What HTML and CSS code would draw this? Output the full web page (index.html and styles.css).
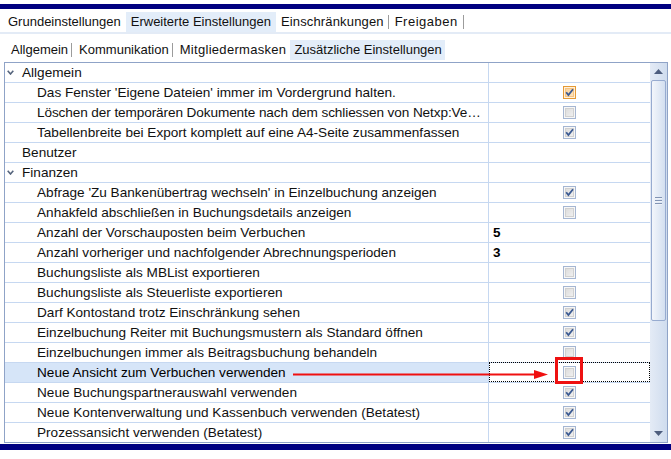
FILE: index.html
```html
<!DOCTYPE html>
<html lang="de">
<head>
<meta charset="utf-8">
<title>Einstellungen</title>
<link rel="stylesheet" href="styles.css">
</head>
<body>
<div class="topbar"></div>
<div class="tabs tabs1">
  <span class="tab">Grundeinstellungen</span>
  <span class="tab active">Erweiterte Einstellungen</span>
  <span class="tab t-ein">Einschränkungen</span><i class="sep"></i>
  <span class="tab t-frei">Freigaben</span><i class="sep"></i>
</div>
<div class="tabs tabs2">
  <span class="tab t-all">Allgemein</span><i class="sep"></i>
  <span class="tab t-kom">Kommunikation</span><i class="sep"></i>
  <span class="tab t-mit">Mitgliedermasken</span>
  <span class="tab active t-zus">Zusätzliche Einstellungen</span>
</div>

<div class="grid">
  <div class="rows">
    <div class="row group"><div class="name"><svg class="chev" width="7" height="5" viewBox="0 0 7 5"><polyline points="0.7,0.8 3.5,4 6.3,0.8" fill="none" stroke="#56657d" stroke-width="1.6"/></svg>Allgemein</div><div class="val"></div></div>
    <div class="row"><div class="name child">Das Fenster 'Eigene Dateien' immer im Vordergrund halten.</div><div class="val"><span class="cb hover"><svg width="11" height="11" viewBox="0 0 11 11"><polyline points="2.2,5.2 4.4,8 9,2.2" fill="none" stroke="#3b5a92" stroke-width="1.8"/></svg></span></div></div>
    <div class="row"><div class="name child narrow">Löschen der temporären Dokumente nach dem schliessen von Netxp:Vereinsverwaltung</div><div class="val"><span class="cb"></span></div></div>
    <div class="row"><div class="name child">Tabellenbreite bei Export komplett auf eine A4-Seite zusammenfassen</div><div class="val"><span class="cb"><svg width="11" height="11" viewBox="0 0 11 11"><polyline points="2.2,5.2 4.4,8 9,2.2" fill="none" stroke="#3b5a92" stroke-width="1.8"/></svg></span></div></div>
    <div class="row group"><div class="name nochev">Benutzer</div><div class="val"></div></div>
    <div class="row group"><div class="name"><svg class="chev" width="7" height="5" viewBox="0 0 7 5"><polyline points="0.7,0.8 3.5,4 6.3,0.8" fill="none" stroke="#56657d" stroke-width="1.6"/></svg>Finanzen</div><div class="val"></div></div>
    <div class="row"><div class="name child">Abfrage 'Zu Bankenübertrag wechseln' in Einzelbuchung anzeigen</div><div class="val"><span class="cb"><svg width="11" height="11" viewBox="0 0 11 11"><polyline points="2.2,5.2 4.4,8 9,2.2" fill="none" stroke="#3b5a92" stroke-width="1.8"/></svg></span></div></div>
    <div class="row"><div class="name child">Anhakfeld abschließen in Buchungsdetails anzeigen</div><div class="val"><span class="cb"></span></div></div>
    <div class="row"><div class="name child">Anzahl der Vorschauposten beim Verbuchen</div><div class="val num">5</div></div>
    <div class="row"><div class="name child">Anzahl vorheriger und nachfolgender Abrechnungsperioden</div><div class="val num">3</div></div>
    <div class="row"><div class="name child">Buchungsliste als MBList exportieren</div><div class="val"><span class="cb"></span></div></div>
    <div class="row"><div class="name child">Buchungsliste als Steuerliste exportieren</div><div class="val"><span class="cb"></span></div></div>
    <div class="row"><div class="name child">Darf Kontostand trotz Einschränkung sehen</div><div class="val"><span class="cb"><svg width="11" height="11" viewBox="0 0 11 11"><polyline points="2.2,5.2 4.4,8 9,2.2" fill="none" stroke="#3b5a92" stroke-width="1.8"/></svg></span></div></div>
    <div class="row"><div class="name child">Einzelbuchung Reiter mit Buchungsmustern als Standard öffnen</div><div class="val"><span class="cb"><svg width="11" height="11" viewBox="0 0 11 11"><polyline points="2.2,5.2 4.4,8 9,2.2" fill="none" stroke="#3b5a92" stroke-width="1.8"/></svg></span></div></div>
    <div class="row"><div class="name child">Einzelbuchungen immer als Beitragsbuchung behandeln</div><div class="val"><span class="cb"></span></div></div>
    <div class="row sel"><div class="name child">Neue Ansicht zum Verbuchen verwenden</div><div class="val"><span class="cb"></span></div></div>
    <div class="row"><div class="name child">Neue Buchungspartnerauswahl verwenden</div><div class="val"><span class="cb"><svg width="11" height="11" viewBox="0 0 11 11"><polyline points="2.2,5.2 4.4,8 9,2.2" fill="none" stroke="#3b5a92" stroke-width="1.8"/></svg></span></div></div>
    <div class="row"><div class="name child">Neue Kontenverwaltung und Kassenbuch verwenden (Betatest)</div><div class="val"><span class="cb"><svg width="11" height="11" viewBox="0 0 11 11"><polyline points="2.2,5.2 4.4,8 9,2.2" fill="none" stroke="#3b5a92" stroke-width="1.8"/></svg></span></div></div>
    <div class="row"><div class="name child">Prozessansicht verwenden (Betatest)</div><div class="val"><span class="cb"><svg width="11" height="11" viewBox="0 0 11 11"><polyline points="2.2,5.2 4.4,8 9,2.2" fill="none" stroke="#3b5a92" stroke-width="1.8"/></svg></span></div></div>
  </div>
  <div class="scroll">
    <div class="sbtn"><svg width="9" height="5" viewBox="0 0 9 5"><polygon points="0,5 4.5,0 9,5" fill="#4d5d7e"/></svg></div>
    <div class="thumb"><i></i><i></i><i></i></div>
    <div class="track"></div>
    <div class="sbtn"><svg width="9" height="5" viewBox="0 0 9 5"><polygon points="0,0 9,0 4.5,5" fill="#4d5d7e"/></svg></div>
  </div>
</div>
<div class="bottombar"></div>

<svg class="annot" width="671" height="459" viewBox="0 0 671 459">
  <line x1="293" y1="374.5" x2="537" y2="374.5" stroke="#f01010" stroke-width="2"/>
  <polygon points="534,370 548,374.5 534,379" fill="#f01010"/>
  <rect x="556.5" y="358.5" width="25" height="24" fill="none" stroke="#ee1111" stroke-width="3"/>
</svg>
</body>
</html>
```

FILE: styles.css
```css
body {
  margin: 0;
  background: #fff;
  font-family: "Liberation Sans", Arial, sans-serif;
  font-size: 13px;
  color: #111;
}

.topbar {
  margin-top: 4px;
  height: 5px;
  background: #000080;
}

.tabs {
  display: flex;
  align-items: center;
  height: 20px;
}

.tabs1 {
  margin-top: 3px;
  padding-left: 3px;
  border-bottom: 2px solid #e3ebf6;
}

.tabs2 {
  margin-top: 6px;
  padding-left: 6px;
}

.tab {
  height: 20px;
  line-height: 20px;
  padding: 0 5px;
  white-space: nowrap;
}

.tab.active {
  background: #e3edf9;
}

.t-ein { padding: 0 4px 0 5px; letter-spacing: 0.15px; }
.t-frei { padding: 0 5px 0 6px; letter-spacing: 0.5px; }
.t-all { padding: 0 3px 0 5px; }
.t-kom { padding: 0 3px 0 7px; }
.t-mit { padding: 0 4px 0 7px; letter-spacing: 0.3px; }
.t-zus { padding: 0 3px 0 4px; }

.sep {
  display: block;
  width: 1px;
  height: 14px;
  background: #9c9c9c;
}

.grid {
  margin: 2px 0 0 4px;
  width: 664px;
  box-sizing: border-box;
  border: 1px solid #8fa3c7;
  display: flex;
}

.rows {
  width: 645px;
  height: 379px;
  overflow: hidden;
  font-size: 13.6px;
}

.row {
  display: flex;
  height: 19px;
  border-bottom: 1px solid #c6d8f1;
}

.name {
  width: 484px;
  box-sizing: border-box;
  border-right: 1px solid #c6d8f1;
  line-height: 19px;
  white-space: nowrap;
  overflow: hidden;
  text-overflow: ellipsis;
  padding-left: 2px;
  padding-right: 3px;
}

.name.narrow {
  letter-spacing: -0.1px;
}

.chev {
  display: inline-block;
  vertical-align: middle;
  margin: -2px 8px 0 0;
}

.name.nochev {
  padding-left: 17px;
}

.name.child {
  padding-left: 32px;
}

.val {
  flex: 1;
  display: flex;
  align-items: center;
  justify-content: center;
}

.val.num {
  justify-content: flex-start;
  padding-left: 4px;
  font-weight: bold;
  color: #000;
  font-size: 13.5px;
}

.row.sel .name {
  background: #d6e5f8;
  color: #000;
}

.row.sel .val {
  margin-top: -1px;
  height: 20px;
  outline: 1px dotted #000;
  outline-offset: -1px;
}

.cb {
  width: 13px;
  height: 13px;
  box-sizing: border-box;
  border: 1px solid #a5b6d2;
  background: linear-gradient(135deg, #d8d8d8, #f4f4f4);
  box-shadow: inset 0 0 0 1px #f7f7f7, inset 0 0 0 2px #d0d0d0;
  display: block;
}

.cb svg {
  display: block;
}

.cb.hover {
  border-color: #e49a36;
  background: linear-gradient(135deg, #f9cf94, #fde6c4);
  box-shadow: inset 0 0 0 1px #fff1dc, inset 0 0 0 2px #f6c483;
}

.scroll {
  width: 17px;
  height: 379px;
  display: flex;
  flex-direction: column;
  align-items: center;
  background: linear-gradient(to right, #e4ebf6, #cfdcee);
}

.sbtn {
  width: 17px;
  height: 17px;
  display: flex;
  align-items: center;
  justify-content: center;
  flex: none;
}

.thumb {
  width: 15px;
  height: 241px;
  box-sizing: border-box;
  border: 1px solid #97abd0;
  border-radius: 2px;
  background: linear-gradient(to right, #f3f6fb, #d3dff0);
  display: flex;
  flex-direction: column;
  align-items: center;
  justify-content: center;
  gap: 1px;
  flex: none;
}

.thumb i {
  display: block;
  width: 7px;
  height: 1px;
  background: #8294b4;
  border-bottom: 1px solid #eef2f9;
}

.track {
  flex: 1;
}

.bottombar {
  margin-top: 1px;
  height: 6px;
  background: #000080;
}

.annot {
  position: absolute;
  left: 0;
  top: 0;
  pointer-events: none;
}
```
